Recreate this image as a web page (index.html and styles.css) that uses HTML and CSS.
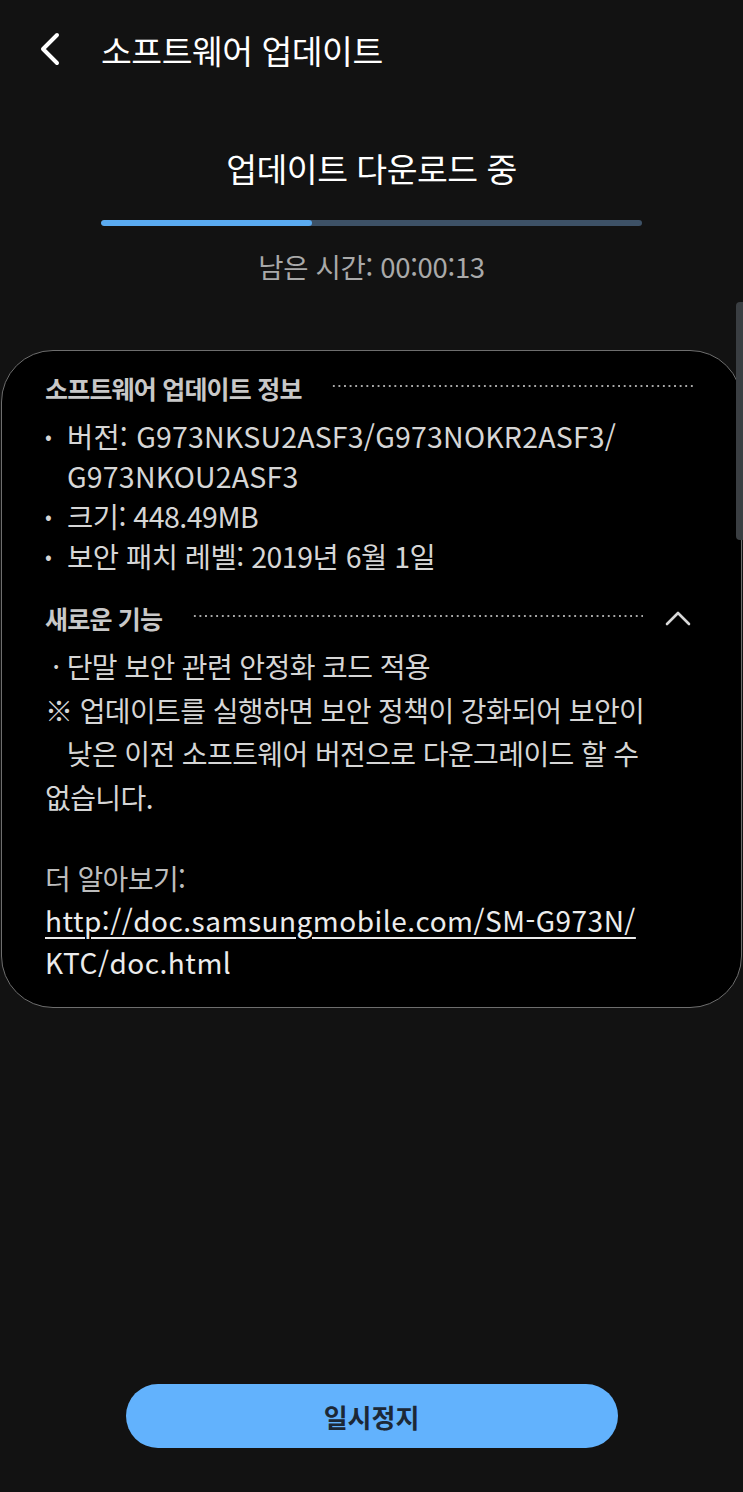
FILE: index.html
```html
<!DOCTYPE html>
<html lang="ko">
<head>
<meta charset="utf-8">
<link rel="stylesheet" href="styles.css">
</head>
<body>
<div class="page">
  <header class="appbar">
    <svg class="back" width="24" height="34" viewBox="0 0 24 34"><polyline points="19,3 5,17 19,31" fill="none" stroke="#fff" stroke-width="4" stroke-linecap="round" stroke-linejoin="round"/></svg>
    <h1 class="title">소프트웨어 업데이트</h1>
  </header>

  <section class="status">
    <div class="status-title">업데이트 다운로드 중</div>
    <div class="progress"><div class="progress-fill" style="width:39%"></div></div>
    <div class="remaining">남은 시간: 00:00:13</div>
  </section>

  <div class="scrollbar"></div>

  <section class="card">
    <div class="sec-head">
      <span class="sec-title">소프트웨어 업데이트 정보</span>
      <span class="dots"></span>
    </div>
    <ul class="info">
      <li><span class="bullet">•</span><span class="version">버전: G973NKSU2ASF3/G973NOKR2ASF3/<br>G973NKOU2ASF3</span></li>
      <li><span class="bullet">•</span><span>크기: 448.49MB</span></li>
      <li><span class="bullet">•</span><span>보안 패치 레벨: 2019년 6월 1일</span></li>
    </ul>
    <div class="sec-head sec-head2">
      <span class="sec-title">새로운 기능</span>
      <span class="dots"></span>
      <svg class="chev" width="26" height="16" viewBox="0 0 26 16"><polyline points="2,14 13,3 24,14" fill="none" stroke="#d8d8d8" stroke-width="2.6" stroke-linecap="round" stroke-linejoin="round"/></svg>
    </div>
    <div class="notes">
      <p>&nbsp;· 단말 보안 관련 안정화 코드 적용</p>
      <p>※ 업데이트를 실행하면 보안 정책이 강화되어 보안이<br>&nbsp;&nbsp;&nbsp;낮은 이전 소프트웨어 버전으로 다운그레이드 할 수<br>없습니다.</p>
    </div>
    <div class="more">
      <p class="more-label">더 알아보기:</p>
      <p><a class="link" href="#">http://doc.samsungmobile.com/SM-G973N/</a><br><span class="link-tail">KTC/doc.html</span></p>
    </div>
  </section>

  <div class="spacer"></div>

  <div class="actions">
    <button class="pause">일시정지</button>
  </div>
</div>
</body>
</html>
```

FILE: styles.css
```css
* { box-sizing: border-box; }
html, body {
  margin: 0;
  padding: 0;
  background: #121212;
}
body {
  font-family: "Noto Sans CJK KR", "Noto Sans", sans-serif;
  color: #fff;
}
.page {
  position: relative;
  min-height: 1492px;
  display: flex;
  flex-direction: column;
}
.appbar {
  height: 100px;
  display: flex;
  align-items: center;
  padding-left: 38px;
}
.back { display: block; margin-top: -2px; }
.title {
  margin: 0 0 0 39px;
  font-size: 33.5px;
  font-weight: 400;
  letter-spacing: -0.5px;
  line-height: 46px;
  color: #fff;
}
.status {
  display: flex;
  flex-direction: column;
  align-items: center;
  padding-top: 45px;
}
.status-title {
  font-size: 33.5px;
  line-height: 46px;
  letter-spacing: -0.5px;
  color: #fff;
}
.progress {
  margin-top: 29px;
  width: 541px;
  height: 6px;
  border-radius: 3px;
  background: #3d5166;
  overflow: hidden;
}
.progress-fill {
  height: 100%;
  border-radius: 3px;
  background: #5aaaf0;
}
.remaining {
  margin-top: 22px;
  font-size: 27.5px;
  line-height: 36px;
  color: #a9a9a9;
  letter-spacing: -0.3px;
}
.scrollbar {
  position: absolute;
  right: 0;
  top: 302px;
  width: 7px;
  height: 238px;
  border-radius: 4px 0 0 4px;
  background: #3a3e42;
}
.card {
  margin-top: 66px;
  margin-left: 1px;
  margin-right: 1px;
  background: #000;
  border: 1.5px solid #6e6e6e;
  border-radius: 52px;
  padding: 17px 46px 24px 43px;
  color: #d6d6d6;
}
.sec-head {
  display: flex;
  align-items: center;
  height: 40px;
}
.sec-title {
  font-size: 25px;
  font-weight: 700;
  color: #c8c8c8;
  letter-spacing: -0.8px;
}
.dots {
  flex: 1;
  height: 2px;
  margin-left: 29px;
  margin-top: -4px;
  background-image: radial-gradient(circle, #a8a8a8 1px, transparent 1.3px);
  background-size: 5.6px 2px;
  background-repeat: repeat-x;
}
.sec-head2 .dots { margin-left: 30px; margin-right: 22px; }
.chev { display: block; margin-right: 4px; }
.info {
  list-style: none;
  margin: 8px 0 0;
  padding: 0;
  font-size: 28.5px;
  line-height: 40px;
  letter-spacing: -0.5px;
}
.info .version { letter-spacing: 0.2px; }
.info li { display: flex; }
.bullet {
  width: 22px;
  flex: none;
  font-size: 20px;
  color: #d6d6d6;
}
.sec-head2 { margin-top: 22px; }
.notes {
  font-size: 28px;
  line-height: 43.5px;
  letter-spacing: -0.6px;
  margin-top: 7px;
}
.notes p, .more p { margin: 0; }
.more {
  margin-top: 38px;
  font-size: 28px;
  line-height: 42px;
  letter-spacing: 0.5px;
}
.more-label { color: #bdbdbd; letter-spacing: -0.6px; }
.link {
  color: #ececec;
  text-decoration: underline;
  text-decoration-thickness: 2px;
  text-underline-offset: 5px;
}
.link-tail { color: #ececec; }
.spacer { flex: 1; }
.actions {
  display: flex;
  justify-content: center;
  padding-bottom: 44px;
}
.pause {
  width: 492px;
  height: 64px;
  border: none;
  border-radius: 32px;
  background: #62b2fd;
  font-family: "Noto Sans CJK KR", "Noto Sans", sans-serif;
  font-size: 26px;
  font-weight: 700;
  color: #1c2836;
}
```
